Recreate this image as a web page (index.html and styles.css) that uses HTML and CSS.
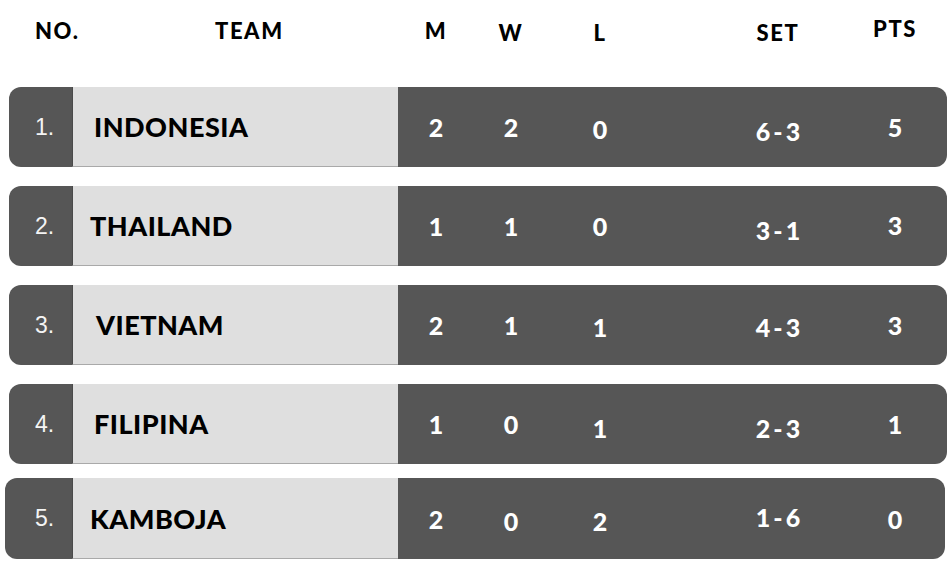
FILE: index.html
```html
<!DOCTYPE html>
<html>
<head>
<meta charset="utf-8">
<link rel="stylesheet" href="styles.css">
</head>
<body>
<div class="standings">
  <div class="head">
    <span class="h-no">NO.</span>
    <span class="h-team">TEAM</span>
    <div class="vals">
      <span class="c-m">M</span>
      <span class="c-w dn2">W</span>
      <span class="c-l dn2">L</span>
      <span class="c-set dn2">SET</span>
      <span class="c-pts up1">PTS</span>
    </div>
  </div>

  <div class="rows">
    <div class="row">
      <div class="no">1.</div>
      <div class="team">INDONESIA</div>
      <div class="vals">
        <span class="c-m">2</span><span class="c-w">2</span><span class="c-l dn2">0</span><span class="c-set dn4">6-3</span><span class="c-pts">5</span>
      </div>
    </div>
    <div class="row">
      <div class="no">2.</div>
      <div class="team t-narrow">THAILAND</div>
      <div class="vals">
        <span class="c-m">1</span><span class="c-w">1</span><span class="c-l">0</span><span class="c-set dn4">3-1</span><span class="c-pts up1">3</span>
      </div>
    </div>
    <div class="row">
      <div class="no">3.</div>
      <div class="team t-wide">VIETNAM</div>
      <div class="vals">
        <span class="c-m">2</span><span class="c-w">1</span><span class="c-l dn2">1</span><span class="c-set dn2">4-3</span><span class="c-pts">3</span>
      </div>
    </div>
    <div class="row">
      <div class="no">4.</div>
      <div class="team">FILIPINA</div>
      <div class="vals">
        <span class="c-m">1</span><span class="c-w">0</span><span class="c-l dn4">1</span><span class="c-set dn4">2-3</span><span class="c-pts">1</span>
      </div>
    </div>
    <div class="row r5">
      <div class="no">5.</div>
      <div class="team t-narrow">KAMBOJA</div>
      <div class="vals">
        <span class="c-m">2</span><span class="c-w dn2">0</span><span class="c-l dn2">2</span><span class="c-set up1">1-6</span><span class="c-pts">0</span>
      </div>
    </div>
  </div>
</div>
</body>
</html>
```

FILE: styles.css
```css
* { box-sizing: border-box; }

html, body {
  margin: 0;
  padding: 0;
  background: #ffffff;
}

body {
  width: 952px;
  height: 565px;
  overflow: hidden;
  font-family: "Lato", "Liberation Sans", sans-serif;
}

.standings {
  padding: 14px 0 0 9px;
  width: 947px;
}

.head {
  display: grid;
  grid-template-columns: 63px 326px 1fr;
  align-items: center;
  height: 32px;
  font-weight: 900;
  font-size: 22px;
  letter-spacing: 1.6px;
  color: #000;
  margin-bottom: 41px;
}

.h-no { padding-left: 26px; }
.h-team { padding-left: 143px; }

.vals {
  display: grid;
  grid-template-columns: 76px 74px 104px 86px 80px 37px 80px;
  justify-items: center;
  align-items: center;
  height: 100%;
}

.c-m { grid-column: 1; }
.c-w { grid-column: 2; }
.c-l { grid-column: 3; }
.c-set { grid-column: 5; }
.c-pts { grid-column: 7; }

.dn2 { margin-top: 4px; }
.dn4 { margin-top: 8px; }
.up1 { margin-top: -3px; }

.rows {
  display: flex;
  flex-direction: column;
  gap: 19px;
}

.row {
  display: grid;
  grid-template-columns: 63px 326px 1fr;
  height: 80px;
  width: 938px;
  background: #565656;
  border-radius: 12px;
  overflow: hidden;
  color: #fff;
}

.row.r5 {
  margin-top: -5px;
  margin-left: -4px;
  width: 940px;
  height: 81px;
  grid-template-columns: 67px 326px 1fr;
}

.no {
  display: flex;
  align-items: center;
  padding-left: 26px;
  font-family: "Liberation Sans", Arial, sans-serif;
  font-size: 23px;
  color: #f4f4f4;
}

.r5 .no { padding-left: 30px; }

.team {
  display: flex;
  align-items: center;
  padding-left: 21px;
  background: #dfdfdf;
  border-bottom: 1px solid #a9a9a9;
  border-left: 1px solid #4a4a4a;
  color: #000;
  font-weight: 900;
  font-size: 27px;
  letter-spacing: 0.5px;
}

.team.t-narrow { padding-left: 17px; }
.team.t-wide { padding-left: 23px; }

.row .vals {
  font-weight: 900;
  font-size: 25px;
  color: #fff;
}

.row .c-set { letter-spacing: 3px; margin-left: 3px; }
```
